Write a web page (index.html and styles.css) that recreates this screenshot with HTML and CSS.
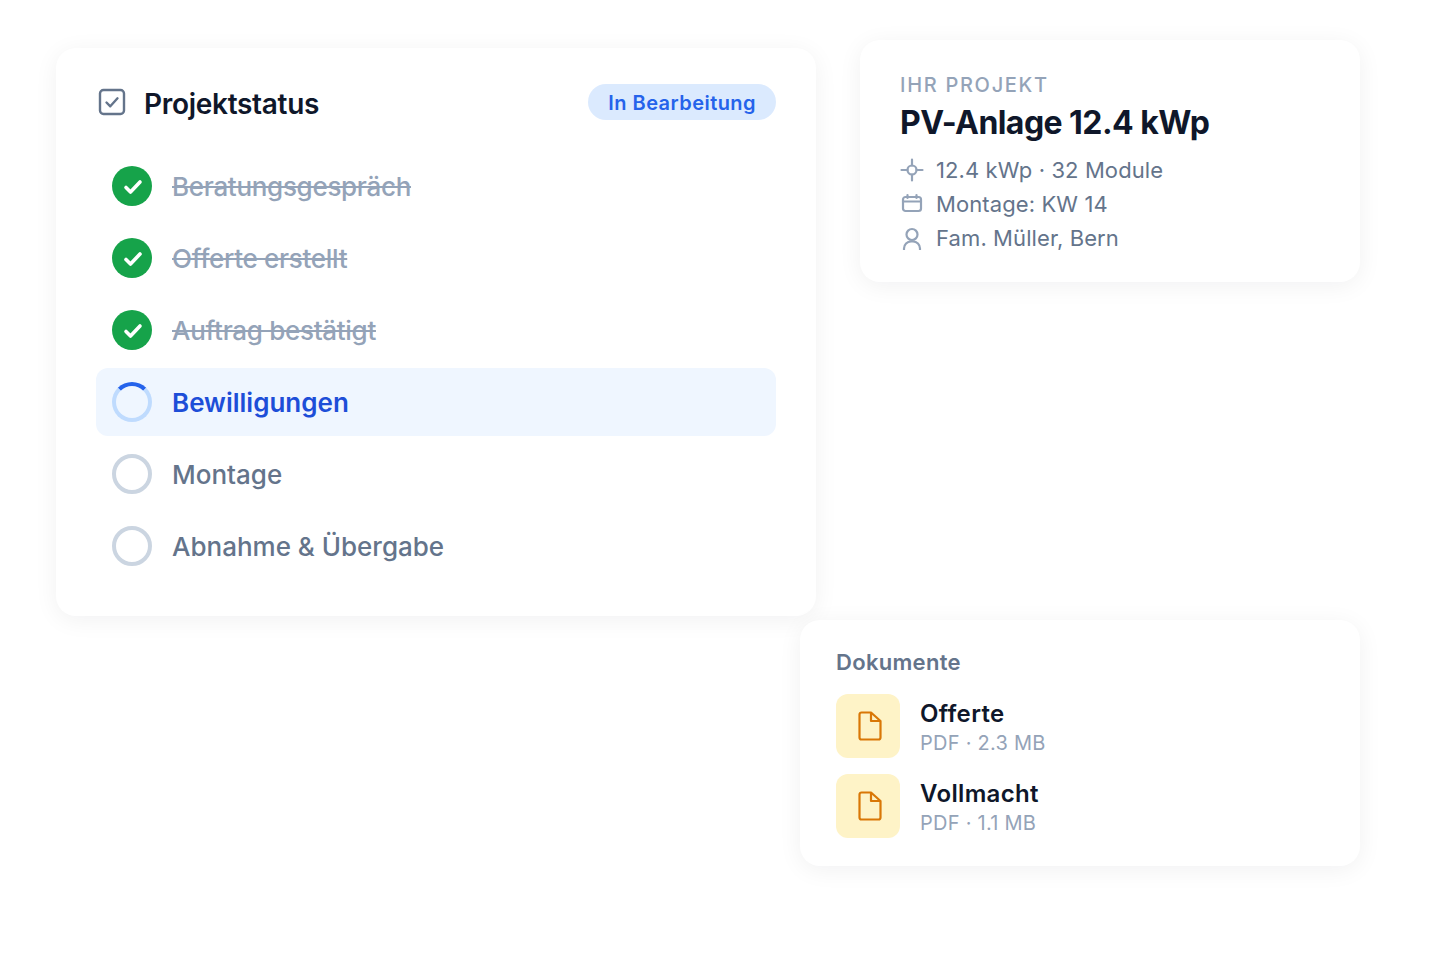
FILE: index.html
```html
<!DOCTYPE html>
<html lang="de">
<head>
  <meta charset="UTF-8">
  <title>Projektstatus</title>
  <link rel="stylesheet" href="styles.css">
</head>
<body>
  <div class="stage">
    <section class="card status-card">
      <div class="status-head">
        <svg class="head-icon" viewBox="0 0 28 28" fill="none">
          <rect x="2" y="2" width="24" height="24" rx="3.5"/>
          <path d="M8.5 14.5l3.8 3.8 7.2-8"/>
        </svg>
        <h2 class="status-title">Projektstatus</h2>
        <span class="badge">In Bearbeitung</span>
      </div>
      <ul class="steps">
        <li class="step done">
          <span class="dot"><svg viewBox="0 0 40 40" fill="none"><path d="M14 21.5l4.500 4.500 9.500-10"/></svg></span>
          <span class="step-label">Beratungsgespräch</span>
        </li>
        <li class="step done">
          <span class="dot"><svg viewBox="0 0 40 40" fill="none"><path d="M14 21.5l4.500 4.500 9.500-10"/></svg></span>
          <span class="step-label">Offerte erstellt</span>
        </li>
        <li class="step done">
          <span class="dot"><svg viewBox="0 0 40 40" fill="none"><path d="M14 21.5l4.500 4.500 9.500-10"/></svg></span>
          <span class="step-label">Auftrag bestätigt</span>
        </li>
        <li class="step active">
          <span class="dot"></span>
          <span class="step-label">Bewilligungen</span>
        </li>
        <li class="step">
          <span class="dot"></span>
          <span class="step-label">Montage</span>
        </li>
        <li class="step">
          <span class="dot"></span>
          <span class="step-label">Abnahme &amp; Übergabe</span>
        </li>
      </ul>
    </section>

    <section class="card project-card">
      <div class="eyebrow">IHR PROJEKT</div>
      <h1 class="project-title">PV-Anlage 12.4 kWp</h1>
      <ul class="facts">
        <li class="fact">
          <svg viewBox="0 0 24 24" fill="none"><circle cx="12" cy="12" r="4.500"/><path d="M12 1.500v6M12 16.500v6M1.500 12h6M16.500 12h6"/></svg>
          12.4 kWp · 32 Module
        </li>
        <li class="fact">
          <svg viewBox="0 0 24 24" fill="none"><rect x="3" y="5" width="18" height="14" rx="2.500"/><path d="M3 9.500h18M7.500 3v3M16.500 3v3"/></svg>
          Montage: KW 14
        </li>
        <li class="fact">
          <svg viewBox="0 0 24 24" fill="none"><circle cx="12" cy="8.500" r="5.500"/><path d="M4 23.500v-1a7 7 0 0 1 7-7h2a7 7 0 0 1 7 7v1"/></svg>
          Fam. Müller, Bern
        </li>
      </ul>
    </section>

    <section class="card docs-card">
      <h3 class="docs-title">Dokumente</h3>
      <div class="doc">
        <span class="doc-icon"><svg viewBox="0 0 24 30" fill="none"><path d="M13 1.500H3.500a2 2 0 0 0-2 2v23a2 2 0 0 0 2 2h17a2 2 0 0 0 2-2V10zM13 1.500V10h9.500"/></svg></span>
        <div class="doc-text">
          <div class="doc-name">Offerte</div>
          <div class="doc-meta">PDF · 2.3 MB</div>
        </div>
      </div>
      <div class="doc">
        <span class="doc-icon"><svg viewBox="0 0 24 30" fill="none"><path d="M13 1.500H3.500a2 2 0 0 0-2 2v23a2 2 0 0 0 2 2h17a2 2 0 0 0 2-2V10zM13 1.500V10h9.500"/></svg></span>
        <div class="doc-text">
          <div class="doc-name">Vollmacht</div>
          <div class="doc-meta">PDF · 1.1 MB</div>
        </div>
      </div>
    </section>
  </div>
</body>
</html>
```

FILE: styles.css
```css
* {
  box-sizing: border-box;
}

html, body {
  margin: 0;
  padding: 0;
  background: #fff;
  font-family: Inter, "Liberation Sans", sans-serif;
}

h1, h2, h3, ul {
  margin: 0;
  padding: 0;
  list-style: none;
}

.stage {
  display: grid;
  grid-template-columns: 744px 16px 44px 500px;
  grid-template-rows: 576px auto;
  min-height: 960px;
  align-content: start;
  padding: 40px 0 0 56px;
}

.card {
  background: #fff;
  border-radius: 20px;
  box-shadow: 0 4px 24px rgba(15, 23, 42, 0.06);
}

/* status */
.status-card {
  grid-column: 1 / 3;
  grid-row: 1;
  margin-top: 8px;
  padding: 36px 40px;
}

.status-head {
  display: flex;
  align-items: center;
  height: 36px;
  margin-bottom: 32px;
}

.head-icon {
  width: 28px;
  height: 28px;
  margin-left: 2px;
  margin-right: 18px;
  stroke: #64748b;
  stroke-width: 2.4;
  stroke-linecap: round;
  stroke-linejoin: round;
}

.status-title {
  flex: 1;
  margin-top: 4px;
  font-size: 28px;
  font-weight: 600;
  letter-spacing: -0.3px;
  color: #0f172a;
}

.badge {
  height: 36px;
  line-height: 38px;
  padding: 0 20px;
  border-radius: 18px;
  background: #dbeafe;
  color: #2563eb;
  font-size: 20px;
  font-weight: 600;
  letter-spacing: 0.45px;
}

.steps {
  display: flex;
  flex-direction: column;
  gap: 4px;
}

.step {
  display: flex;
  align-items: center;
  gap: 20px;
  height: 68px;
  padding: 0 16px;
  border-radius: 12px;
  font-size: 26px;
  font-weight: 500;
  color: #64748b;
}

.dot {
  width: 40px;
  height: 40px;
  flex: none;
  border-radius: 50%;
  border: 4px solid #cbd5e1;
}

.done .dot {
  border: none;
  background: #16a34a;
}

.dot svg {
  display: block;
  width: 40px;
  height: 40px;
  stroke: #fff;
  stroke-width: 3.6;
  stroke-linecap: round;
  stroke-linejoin: round;
}

.done .step-label {
  letter-spacing: -0.3px;
  color: #94a3b8;
  text-decoration: line-through;
}

.active {
  background: #eff6ff;
  color: #1d4ed8;
  font-weight: 600;
}

.active .dot {
  border-color: #bfdbfe;
  border-top-color: #2563eb;
}

/* project */
.project-card {
  grid-column: 4;
  grid-row: 1;
  align-self: start;
  height: 242px;
  padding: 32px 40px;
}

.eyebrow {
  font-size: 20px;
  font-weight: 500;
  line-height: 26px;
  letter-spacing: 1.7px;
  color: #94a3b8;
}

.project-title {
  margin-top: 4px;
  font-size: 32px;
  line-height: 42px;
  font-weight: 700;
  letter-spacing: -0.55px;
  color: #0f172a;
}

.facts {
  margin-top: 9px;
}

.fact {
  display: flex;
  align-items: center;
  gap: 12px;
  height: 34px;
  font-size: 22px;
  letter-spacing: 0.1px;
  color: #64748b;
}

.fact svg {
  width: 24px;
  height: 24px;
  flex: none;
  stroke: #94a3b8;
  stroke-width: 2.2;
  stroke-linecap: round;
  stroke-linejoin: round;
}

/* documents */
.docs-card {
  grid-column: 2 / 5;
  grid-row: 2;
  margin-top: 4px;
  height: 246px;
  padding: 28px 36px;
}

.docs-title {
  margin-bottom: 18px;
  font-size: 22px;
  line-height: 28px;
  font-weight: 600;
  letter-spacing: 0.3px;
  color: #64748b;
}

.doc {
  display: flex;
  align-items: center;
  gap: 20px;
  margin-bottom: 16px;
}

.doc-icon {
  display: flex;
  align-items: center;
  justify-content: center;
  width: 64px;
  height: 64px;
  padding-left: 4px;
  border-radius: 12px;
  background: #fef3c7;
}

.doc-icon svg {
  width: 24px;
  height: 30px;
  stroke: #d97706;
  stroke-width: 2.2;
  stroke-linejoin: round;
  stroke-linecap: round;
}

.doc-text {
  padding-top: 4px;
}

.doc-name {
  font-size: 24px;
  line-height: 30px;
  font-weight: 600;
  letter-spacing: 0.35px;
  color: #0f172a;
}

.doc-meta {
  font-size: 20px;
  line-height: 28px;
  letter-spacing: 0.25px;
  color: #94a3b8;
}
```
